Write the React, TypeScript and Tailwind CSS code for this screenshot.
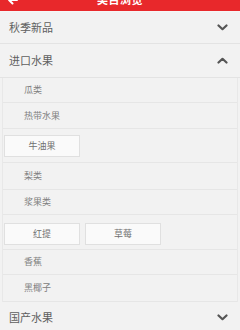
import React from 'react';

type Sub = { kind: 'item'; label: string; h: string } | { kind: 'tags'; tags: string[]; h: string; pt: string };

const subs: Sub[] = [
  { kind: 'item', label: '瓜类', h: 'h-[25px]' },
  { kind: 'item', label: '热带水果', h: 'h-[26px]' },
  { kind: 'tags', tags: ['牛油果'], h: 'h-[34px]', pt: 'pt-[6px]' },
  { kind: 'item', label: '梨类', h: 'h-[27px]' },
  { kind: 'item', label: '浆果类', h: 'h-[25px]' },
  { kind: 'tags', tags: ['红提', '草莓'], h: 'h-[35px]', pt: 'pt-[8px]' },
  { kind: 'item', label: '香蕉', h: 'h-[25px]' },
  { kind: 'item', label: '黑椰子', h: 'h-[27px]' },
];

const Chevron: React.FC<{ up?: boolean }> = ({ up }) => (
  <svg width="11" height="7" viewBox="0 0 11 7" className="mr-[12px]">
    <path
      d={up ? 'M1.5 5.5 L5.5 1.8 L9.5 5.5' : 'M1.5 1.5 L5.5 5.2 L9.5 1.5'}
      fill="none"
      stroke="#555"
      strokeWidth="2.2"
      strokeLinecap="round"
      strokeLinejoin="round"
    />
  </svg>
);

const Section: React.FC<{ title: string; open?: boolean; h: string }> = ({ title, open, h }) => (
  <div className={`${h} flex items-center justify-between border-b border-[#e3e3e3] pl-[9px]`}>
    <span className="text-[11px] text-[#5f5f5f]">{title}</span>
    <Chevron up={open} />
  </div>
);

export default function App() {
  return (
    <div
      className="w-[240px] h-[330px] overflow-hidden bg-[#f2f2f2]"
      style={{ fontFamily: '"Noto Sans CJK SC", "Liberation Sans", sans-serif' }}
    >
      <header className="h-[12px] overflow-hidden bg-[#e8282b] border-b border-[#f6f6f6]">
        <div className="relative h-[14px] -mt-[8px] flex items-center justify-center">
          <svg width="11" height="10" viewBox="0 0 11 10" className="absolute left-[7px] top-[3px]">
            <path d="M10 5 H2 M5.5 1.5 L2 5 L5.5 8.5" fill="none" stroke="#fff" strokeWidth="2" strokeLinecap="round" strokeLinejoin="round" />
          </svg>
          <span className="text-[11px] font-bold text-white tracking-[0.5px]">类目浏览</span>
        </div>
      </header>

      <Section title="秋季新品" h="h-[32px]" />
      <Section title="进口水果" open h="h-[34px]" />

      <div className="mx-[2px] border-x border-[#e8e8e8]">
        {subs.map((s, i) =>
          s.kind === 'item' ? (
            <div key={i} className={`${s.h} flex items-center border-b border-[#e6e6e6] pl-[21px]`}>
              <span className="text-[9px] text-[#808080]">{s.label}</span>
            </div>
          ) : (
            <div key={i} className={`${s.h} ${s.pt} flex gap-[5px] border-b border-[#e6e6e6] pl-[1px]`}>
              {s.tags.map((t) => (
                <div
                  key={t}
                  className="w-[76px] h-[22px] flex items-center justify-center bg-[#fafafa] border border-[#e0e0e0] text-[9px] text-[#707070]"
                >
                  {t}
                </div>
              ))}
            </div>
          )
        )}
      </div>

      <Section title="国产水果" h="h-[32px]" />
    </div>
  );
}
